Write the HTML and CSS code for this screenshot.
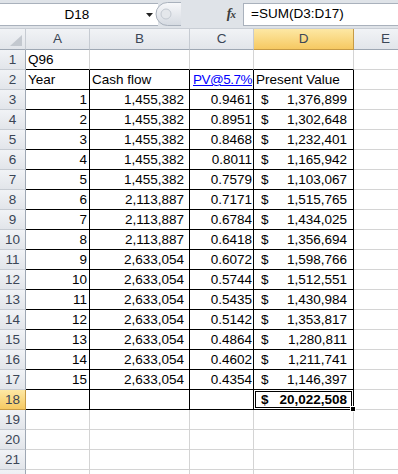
FILE: index.html
```html
<!DOCTYPE html>
<html lang="en">
<head>
<meta charset="UTF-8" />
<title>Q96 – Present Value</title>
<link rel="stylesheet" href="styles.css">
</head>
<body>
<div class="formula-bar">
  <div class="name-box">
    <span class="name">D18</span>
    <svg class="caret" width="8" height="4" viewBox="0 0 8 4"><path d="M0 0h7L3.5 4z" fill="#222"/></svg>
  </div>
  <div class="bar-tools">
    <svg class="splitter" width="26" height="24" viewBox="0 0 26 24">
      <defs>
        <linearGradient id="knob" x1="0" y1="0" x2="0" y2="1">
          <stop offset="0" stop-color="#f7f8fa"/>
          <stop offset="1" stop-color="#d5dae1"/>
        </linearGradient>
      </defs>
      <path d="M26 0.5H12.5a11.5 11.5 0 0 0 0 23H26" fill="url(#knob)" stroke="#a9b1bc"/>
      <circle cx="11" cy="12" r="5" fill="#e4e7eb" stroke="#c3c9d1"/>
    </svg>
    <span class="fx">f<span class="fx-x">x</span></span>
  </div>
  <div class="formula">=SUM(D3:D17)</div>
</div>

<div class="sheet">
  <div class="hd corner"><svg width="12" height="11" viewBox="0 0 12 11"><path d="M12 0v11H0z" fill="#c3c8cf"/></svg></div>
  <div class="hd">A</div>
  <div class="hd">B</div>
  <div class="hd">C</div>
  <div class="hd sel">D</div>
  <div class="hd">E</div>

  <div class="rh">1</div>
  <div class="cell bb">Q96</div>
  <div class="cell bb"></div>
  <div class="cell bb"></div>
  <div class="cell bb"></div>
  <div class="cell"></div>

  <div class="rh">2</div>
  <div class="cell box">Year</div>
  <div class="cell box">Cash flow</div>
  <div class="cell box link">PV@5.7%</div>
  <div class="cell box">Present Value</div>
  <div class="cell"></div>

  <div class="rh">3</div>
  <div class="cell box num">1</div>
  <div class="cell box num cash">1,455,382</div>
  <div class="cell box num rate">0.9461</div>
  <div class="cell box acct"><span>$</span><span>1,376,899</span></div>
  <div class="cell"></div>

  <div class="rh">4</div>
  <div class="cell box num">2</div>
  <div class="cell box num cash">1,455,382</div>
  <div class="cell box num rate">0.8951</div>
  <div class="cell box acct"><span>$</span><span>1,302,648</span></div>
  <div class="cell"></div>

  <div class="rh">5</div>
  <div class="cell box num">3</div>
  <div class="cell box num cash">1,455,382</div>
  <div class="cell box num rate">0.8468</div>
  <div class="cell box acct"><span>$</span><span>1,232,401</span></div>
  <div class="cell"></div>

  <div class="rh">6</div>
  <div class="cell box num">4</div>
  <div class="cell box num cash">1,455,382</div>
  <div class="cell box num rate">0.8011</div>
  <div class="cell box acct"><span>$</span><span>1,165,942</span></div>
  <div class="cell"></div>

  <div class="rh">7</div>
  <div class="cell box num">5</div>
  <div class="cell box num cash">1,455,382</div>
  <div class="cell box num rate">0.7579</div>
  <div class="cell box acct"><span>$</span><span>1,103,067</span></div>
  <div class="cell"></div>

  <div class="rh">8</div>
  <div class="cell box num">6</div>
  <div class="cell box num cash">2,113,887</div>
  <div class="cell box num rate">0.7171</div>
  <div class="cell box acct"><span>$</span><span>1,515,765</span></div>
  <div class="cell"></div>

  <div class="rh">9</div>
  <div class="cell box num">7</div>
  <div class="cell box num cash">2,113,887</div>
  <div class="cell box num rate">0.6784</div>
  <div class="cell box acct"><span>$</span><span>1,434,025</span></div>
  <div class="cell"></div>

  <div class="rh">10</div>
  <div class="cell box num">8</div>
  <div class="cell box num cash">2,113,887</div>
  <div class="cell box num rate">0.6418</div>
  <div class="cell box acct"><span>$</span><span>1,356,694</span></div>
  <div class="cell"></div>

  <div class="rh">11</div>
  <div class="cell box num">9</div>
  <div class="cell box num cash">2,633,054</div>
  <div class="cell box num rate">0.6072</div>
  <div class="cell box acct"><span>$</span><span>1,598,766</span></div>
  <div class="cell"></div>

  <div class="rh">12</div>
  <div class="cell box num">10</div>
  <div class="cell box num cash">2,633,054</div>
  <div class="cell box num rate">0.5744</div>
  <div class="cell box acct"><span>$</span><span>1,512,551</span></div>
  <div class="cell"></div>

  <div class="rh">13</div>
  <div class="cell box num">11</div>
  <div class="cell box num cash">2,633,054</div>
  <div class="cell box num rate">0.5435</div>
  <div class="cell box acct"><span>$</span><span>1,430,984</span></div>
  <div class="cell"></div>

  <div class="rh">14</div>
  <div class="cell box num">12</div>
  <div class="cell box num cash">2,633,054</div>
  <div class="cell box num rate">0.5142</div>
  <div class="cell box acct"><span>$</span><span>1,353,817</span></div>
  <div class="cell"></div>

  <div class="rh">15</div>
  <div class="cell box num">13</div>
  <div class="cell box num cash">2,633,054</div>
  <div class="cell box num rate">0.4864</div>
  <div class="cell box acct"><span>$</span><span>1,280,811</span></div>
  <div class="cell"></div>

  <div class="rh">16</div>
  <div class="cell box num">14</div>
  <div class="cell box num cash">2,633,054</div>
  <div class="cell box num rate">0.4602</div>
  <div class="cell box acct"><span>$</span><span>1,211,741</span></div>
  <div class="cell"></div>

  <div class="rh">17</div>
  <div class="cell box num">15</div>
  <div class="cell box num cash">2,633,054</div>
  <div class="cell box num rate">0.4354</div>
  <div class="cell box acct"><span>$</span><span>1,146,397</span></div>
  <div class="cell"></div>

  <div class="rh sel">18</div>
  <div class="cell box"></div>
  <div class="cell box"></div>
  <div class="cell box"></div>
  <div class="cell box acct total active"><span>$</span><span>20,022,508</span></div>
  <div class="cell"></div>

  <div class="rh">19</div>
  <div class="cell"></div>
  <div class="cell"></div>
  <div class="cell"></div>
  <div class="cell"></div>
  <div class="cell"></div>

  <div class="rh">20</div>
  <div class="cell"></div>
  <div class="cell"></div>
  <div class="cell"></div>
  <div class="cell"></div>
  <div class="cell"></div>

  <div class="rh">21</div>
  <div class="cell"></div>
  <div class="cell"></div>
  <div class="cell"></div>
  <div class="cell"></div>
  <div class="cell"></div>

  <div class="rh"></div>
  <div class="cell"></div>
  <div class="cell"></div>
  <div class="cell"></div>
  <div class="cell"></div>
  <div class="cell"></div>
</div>
</body>
</html>
```

FILE: styles.css
```css
body {
  margin: 0;
  width: 398px;
  height: 474px;
  overflow: hidden;
  background: #fff;
  font-family: "Liberation Sans", Arial, sans-serif;
  color: #000;
}

/* formula bar */
.formula-bar {
  height: 29px;
  box-sizing: border-box;
  padding-top: 3px;
  background: #dfe3e8;
  border-bottom: 1px solid #c9ced5;
  display: flex;
  align-items: flex-start;
}
.name-box {
  width: 158px;
  height: 23px;
  box-sizing: border-box;
  background: #fff;
  border-top: 1px solid #a9b1bc;
  border-bottom: 1px solid #a9b1bc;
  display: flex;
  align-items: center;
}
.name-box .name {
  flex: 1;
  text-align: center;
  font-size: 13.5px;
  padding-left: 8px;
}
.name-box .caret {
  margin-right: 4px;
  margin-top: 1px;
}
.bar-tools {
  width: 88px;
  height: 24px;
  margin-left: -3px;
  margin-top: -1px;
  display: flex;
  align-items: center;
}
.fx {
  margin-left: auto;
  margin-right: 8px;
  font-family: "Liberation Serif", serif;
  font-style: italic;
  font-weight: bold;
  font-size: 14px;
  color: #3b3b3b;
  letter-spacing: -1px;
}
.fx-x {
  font-size: 11px;
}
.formula {
  flex: 1;
  height: 23px;
  box-sizing: border-box;
  background: #fff;
  border: 1px solid #a9b1bc;
  border-right: none;
  padding-left: 7px;
  font-size: 13.5px;
  line-height: 20px;
}

/* grid */
.sheet {
  width: 398px;
  overflow: hidden;
  display: grid;
  grid-template-columns: 26px 64px 100px 64px 100px 64px;
  grid-template-rows: 21px;
  grid-auto-rows: 20px;
  font-size: 13.5px;
}
.hd, .rh {
  box-sizing: border-box;
  background: linear-gradient(#f1f3f6, #e2e5ea);
  color: #3b4656;
  text-align: center;
  line-height: 20px;
}
.hd {
  border-right: 1px solid #c6cbd2;
  border-bottom: 1px solid #9ea7b3;
}
.rh {
  border-right: 1px solid #9ea7b3;
  border-bottom: 1px solid #c6cbd2;
  line-height: 19px;
}
.hd.sel, .rh.sel {
  background: linear-gradient(#fde8a4, #f6c962);
  border-color: #c69a45;
}
.corner {
  display: flex;
  justify-content: flex-end;
  align-items: flex-end;
  padding: 0 3px 3px 0;
}
.cell {
  box-sizing: border-box;
  border-right: 1px solid #d4d4d4;
  border-bottom: 1px solid #d4d4d4;
  padding: 0 2px;
  line-height: 19px;
  white-space: nowrap;
  overflow: hidden;
}
.cell.bb {
  border-bottom-color: #000;
}
.cell.box {
  border-right-color: #000;
  border-bottom-color: #000;
}
.num {
  text-align: right;
}
.cash {
  padding-right: 5px;
}
.rate {
  padding-right: 1px;
}
.link {
  color: #0000ff;
  text-decoration: underline;
  padding-left: 3px;
  letter-spacing: -0.5px;
  overflow: visible;
}
.acct {
  display: flex;
  justify-content: space-between;
  padding: 0 6px 0 7px;
}
.total {
  font-weight: bold;
}
.active {
  position: relative;
  overflow: visible;
  box-shadow: inset 0 0 0 1px #fff, inset 0 0 0 2px #000;
}
.active::after {
  content: "";
  position: absolute;
  right: -3px;
  bottom: -3px;
  width: 4px;
  height: 4px;
  background: #000;
  border: 1px solid #fff;
}
```
